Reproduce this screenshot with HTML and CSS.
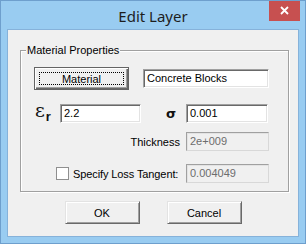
FILE: index.html
```html
<!DOCTYPE html>
<html lang="en">
<head>
  <meta charset="UTF-8" />
  <title>Edit Layer</title>
  <link rel="stylesheet" href="styles.css">
</head>
<body>

  <div class="window">
    <div class="titlebar">
      <span class="title">Edit Layer</span>
      <span class="close">
        <svg width="9" height="9" viewBox="0 0 9 9">
          <path d="M1 1 L8 8 M8 1 L1 8" stroke="#fff" stroke-width="1.8" fill="none" />
        </svg>
      </span>
    </div>

    <div class="client">
      <fieldset class="group">
        <legend>Material Properties</legend>

        <div class="row row-material">
          <button class="btn btn-default"><span class="focus">Material</span></button>
          <div class="field field-name">Concrete Blocks</div>
        </div>

        <div class="row row-params">
          <span class="sym eps">ε<span class="sub">r</span></span>
          <div class="field field-eps">2.2</div>
          <span class="sym sigma">σ</span>
          <div class="field field-sigma">0.001</div>
        </div>

        <div class="row row-thick">
          <span class="label">Thickness</span>
          <div class="field field-wide disabled">2e+009</div>
        </div>

        <div class="row row-loss">
          <span class="check"></span>
          <span class="label">Specify Loss Tangent:</span>
          <div class="field field-wide disabled">0.004049</div>
        </div>
      </fieldset>

      <div class="actions">
        <button class="btn">OK</button>
        <button class="btn">Cancel</button>
      </div>
    </div>
  </div>

</body>
</html>
```

FILE: styles.css
```css
body {
  margin: 0;
  background: #fff;
  font-family: "Liberation Sans", Arial, sans-serif;
  font-size: 11px;
  color: #000;
}

.window {
  width: 306px;
  height: 244px;
  box-sizing: border-box;
  border: 1px solid #6e9fcd;
  background: #99ccf1;
  padding: 0 6px 6px;
  display: flex;
  flex-direction: column;
}

.titlebar {
  position: relative;
  height: 28px;
  flex: none;
  display: flex;
  align-items: center;
  justify-content: center;
}

.title {
  font-family: "Noto Sans", "Open Sans", sans-serif;
  font-size: 15px;
  color: #1e1e1e;
  padding-top: 2px;
}

.close {
  position: absolute;
  top: 0;
  right: -1px;
  width: 31px;
  height: 20px;
  background: #c75050;
  display: flex;
  align-items: center;
  justify-content: center;
}

.close svg {
  display: block;
  margin-top: -1px;
}

.client {
  flex: 1;
  border: 1px solid #86b2da;
  background: #f0f0f0;
  display: flex;
  flex-direction: column;
}

.group {
  margin: 14px 0 0 12px;
  width: 268px;
  box-sizing: border-box;
  padding: 10px 19px 8px 0;
  border: 1px solid #a0a0a0;
  box-shadow: inset 1px 1px #fff, 1px 1px #fff;
}

.group legend {
  margin-left: 5px;
  padding: 0 1px;
  line-height: 13px;
  background: #f0f0f0;
}

.row {
  display: flex;
  align-items: center;
}

.row-material {
  padding-left: 13px;
}

.row-params {
  margin-top: 14px;
  padding-left: 14px;
}

.row-thick {
  margin-top: 9px;
  justify-content: flex-end;
}

.row-loss {
  margin-top: 13px;
  padding-left: 35px;
}

.label {
  white-space: nowrap;
}

.field {
  height: 19px;
  box-sizing: border-box;
  background: #fff;
  border: 1px solid;
  border-color: #a0a0a0 #fff #fff #a0a0a0;
  box-shadow: inset 1px 1px #696969, inset -1px -1px #e3e3e3;
  padding: 0 3px;
  line-height: 17px;
  white-space: nowrap;
}

.field.disabled {
  background: #f0f0f0;
  color: #6d6d6d;
  box-shadow: inset 1px 1px #e3e3e3;
  border-color: #a0a0a0 #d8d8d8 #d8d8d8 #a0a0a0;
}

.field-name {
  width: 126px;
  margin-left: 14px;
}

.field-eps {
  width: 81px;
}

.field-sigma {
  width: 82px;
}

.field-wide {
  flex: none;
  width: 83px;
  margin-left: 6px;
}

.sym {
  color: #111;
}

.eps {
  width: 25px;
  font-family: "DejaVu Serif", serif;
  font-size: 19px;
  line-height: 19px;
  margin-top: -4px;
}

.eps .sub {
  font-family: "Liberation Sans", sans-serif;
  font-weight: bold;
  font-size: 13px;
  position: relative;
  top: 4px;
  margin-left: 1px;
}

.sigma {
  margin-left: 25px;
  width: 20px;
  font-family: "DejaVu Sans", sans-serif;
  font-weight: bold;
  font-size: 13px;
}

.check {
  flex: none;
  width: 13px;
  height: 13px;
  box-sizing: border-box;
  background: #fff;
  border: 1px solid #8f8f8f;
  margin-right: 4px;
}

.row-loss .label {
  flex: 1;
  letter-spacing: -0.1px;
}

.btn {
  width: 75px;
  height: 23px;
  padding: 0;
  font-family: inherit;
  font-size: 11px;
  color: #000;
  background: #f0f0f0;
  border: 1px solid;
  border-color: #e3e3e3 #696969 #696969 #e3e3e3;
  box-shadow: inset 1px 1px #fff, inset -1px -1px #a0a0a0;
  border-radius: 0;
}

.btn-default {
  width: 95px;
  border-color: #646464;
  box-shadow: inset 1px 1px #fff, inset -1px -1px #696969, inset -2px -2px #a0a0a0;
  padding: 4px;
}

.btn-default .focus {
  display: flex;
  align-items: center;
  justify-content: center;
  height: 100%;
  box-sizing: border-box;
  border: 1px dotted #000;
}

.actions {
  margin-top: 9px;
  display: flex;
  justify-content: center;
  gap: 27px;
}
```
